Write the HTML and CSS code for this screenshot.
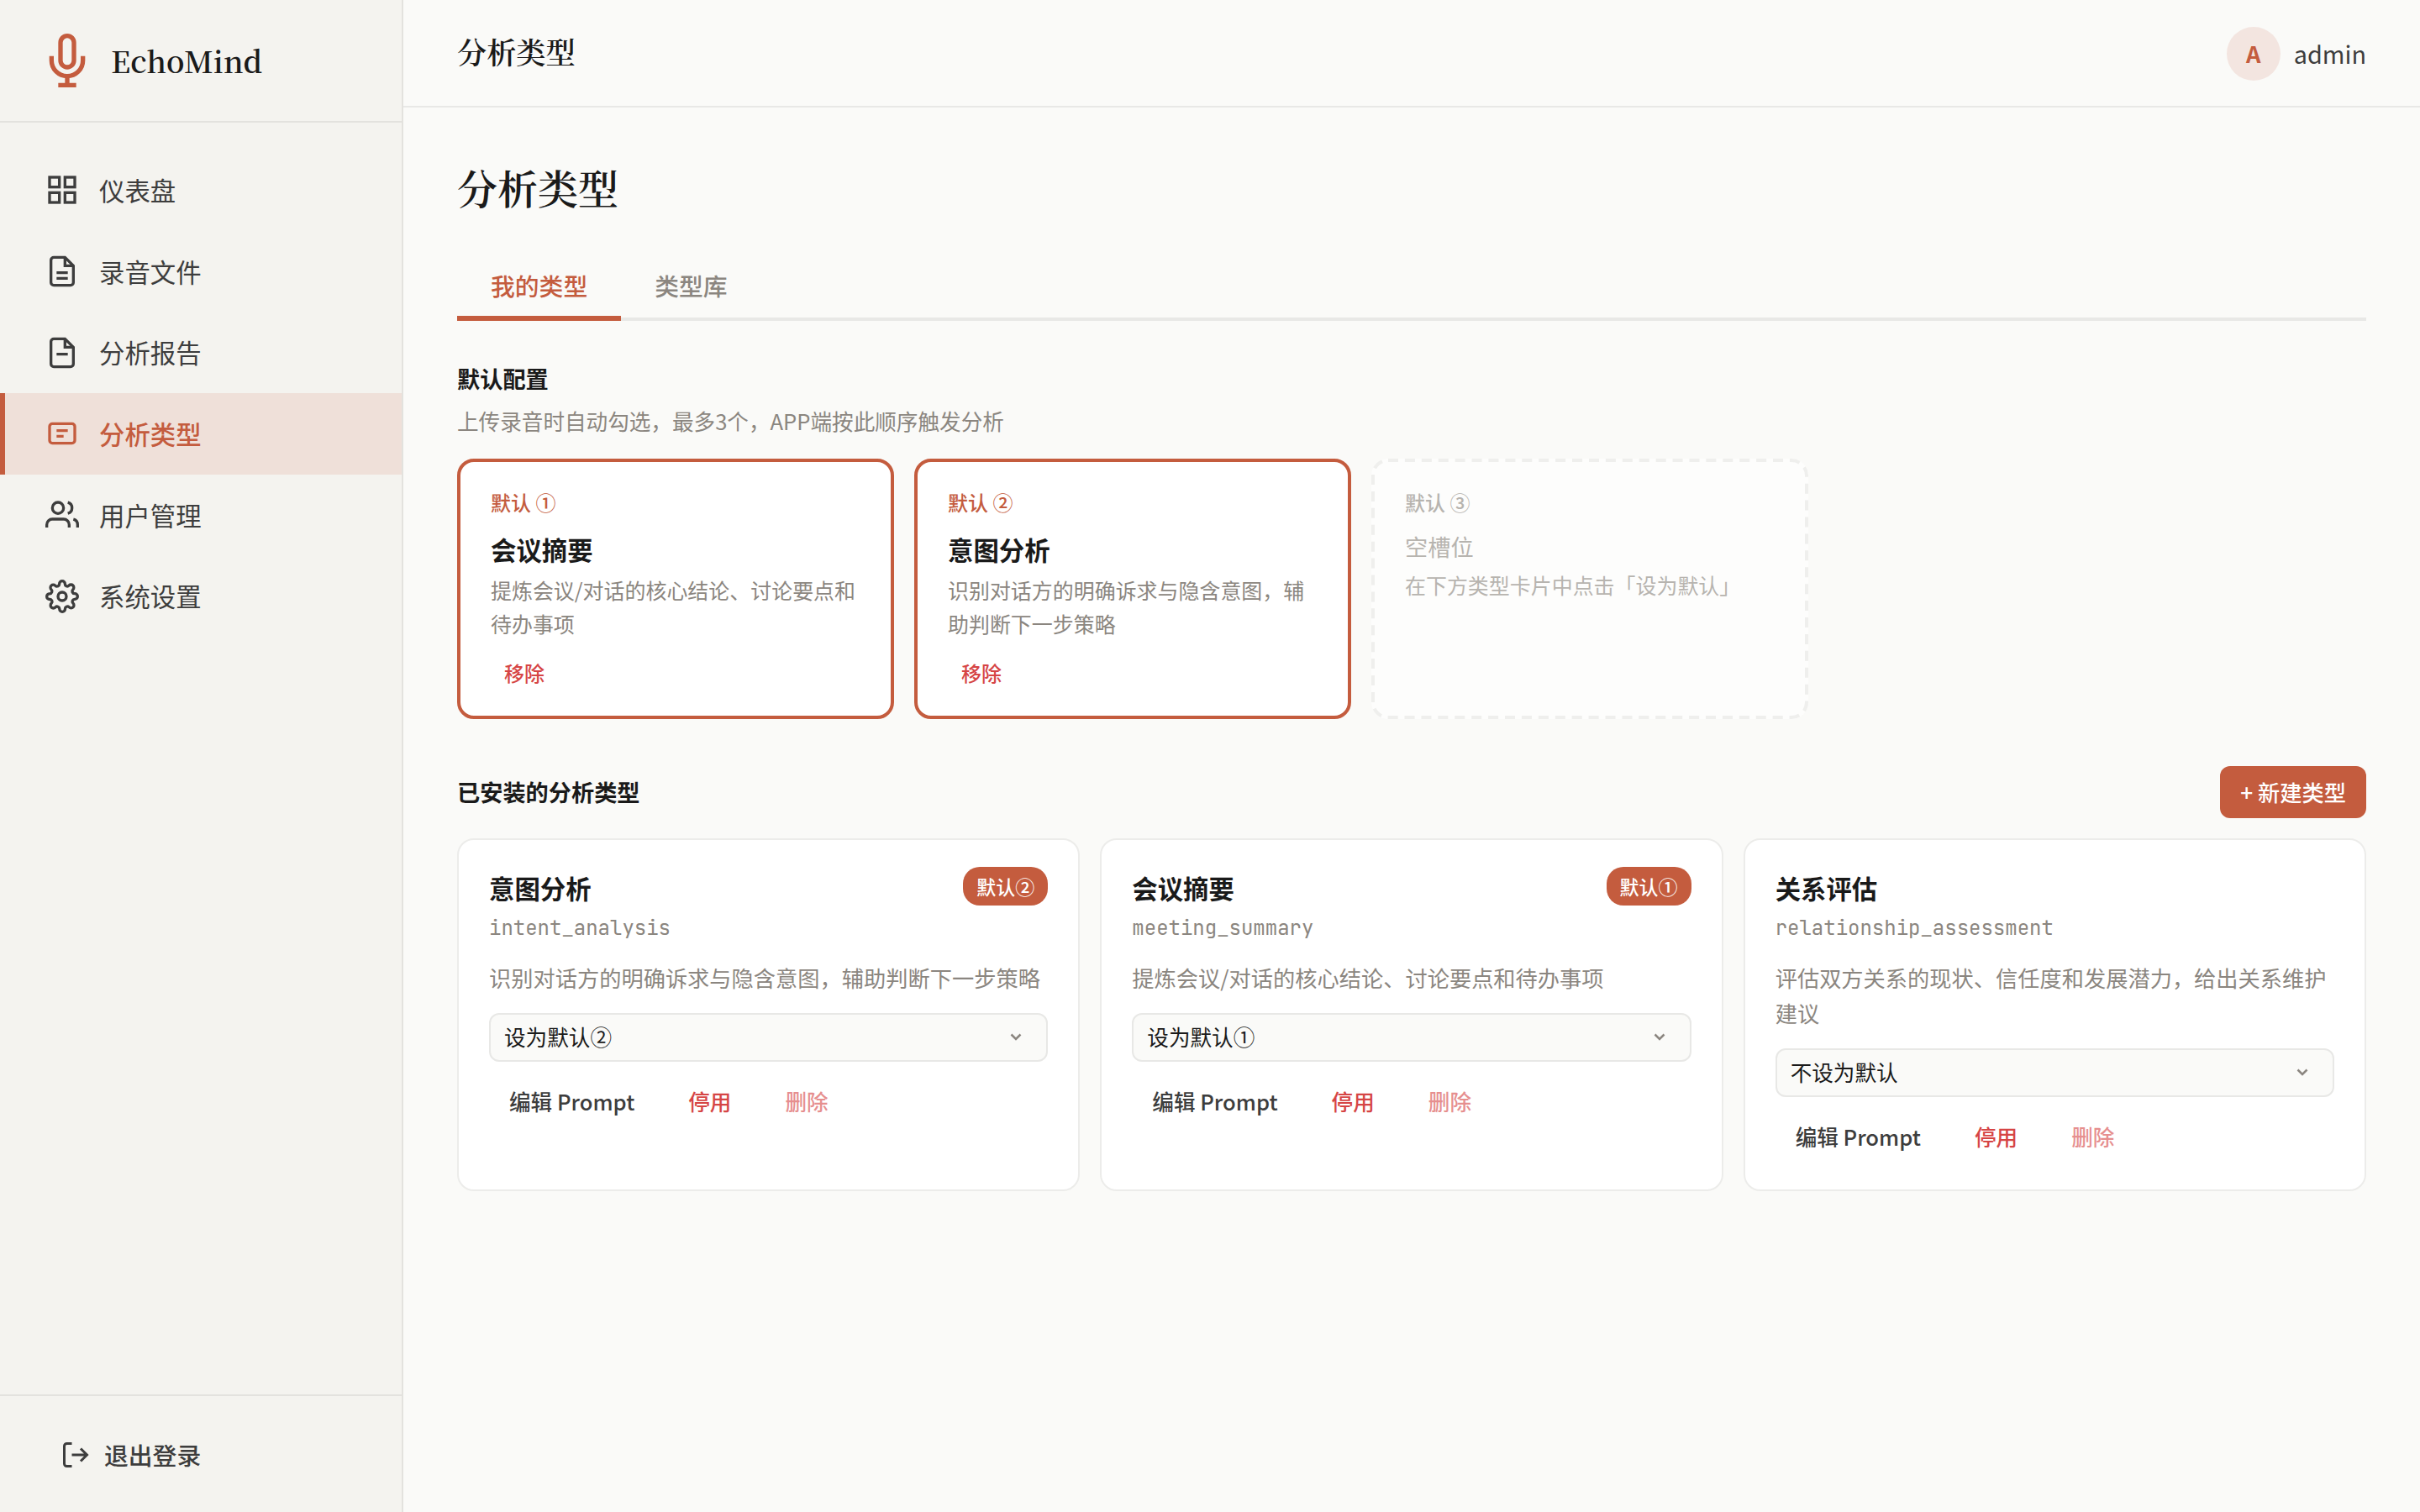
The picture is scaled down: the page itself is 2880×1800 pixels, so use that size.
FILE: index.html
```html
<!DOCTYPE html>
<html lang="zh-CN">
<head>
    <meta charset="UTF-8">
    <meta name="viewport" content="width=device-width, initial-scale=1.0">
    <title>EchoMind - 分析类型</title>
    <link rel="stylesheet" href="styles.css">
</head>
<body>
    <div class="layout">
        <aside class="sidebar">
            <div class="logo">
                <svg class="logo-icon" viewBox="0 0 24 24">
                    <path d="M12 1a3 3 0 0 0-3 3v8a3 3 0 0 0 6 0V4a3 3 0 0 0-3-3z"/>
                    <path d="M19 10v2a7 7 0 0 1-14 0v-2"/>
                    <path d="M12 19v4M8 23h8"/>
                </svg>
                <span class="logo-text">EchoMind</span>
            </div>
            <nav class="nav">
                <a class="nav-item">
                    <svg class="nav-icon" viewBox="0 0 24 24">
                        <rect x="3" y="3" width="7" height="7"/>
                        <rect x="14" y="3" width="7" height="7"/>
                        <rect x="14" y="14" width="7" height="7"/>
                        <rect x="3" y="14" width="7" height="7"/>
                    </svg>
                    <span>仪表盘</span>
                </a>
                <a class="nav-item">
                    <svg class="nav-icon" viewBox="0 0 24 24">
                        <path d="M14 2H6a2 2 0 0 0-2 2v16a2 2 0 0 0 2 2h12a2 2 0 0 0 2-2V8z"/>
                        <path d="M14 2v6h6M16 13H8M16 17H8"/>
                    </svg>
                    <span>录音文件</span>
                </a>
                <a class="nav-item">
                    <svg class="nav-icon" viewBox="0 0 24 24">
                        <path d="M14 2H6a2 2 0 0 0-2 2v16a2 2 0 0 0 2 2h12a2 2 0 0 0 2-2V8z"/>
                        <path d="M14 2v6h6M16 13H8"/>
                    </svg>
                    <span>分析报告</span>
                </a>
                <a class="nav-item active">
                    <svg class="nav-icon" viewBox="0 0 24 24">
                        <rect x="3" y="5" width="18" height="14" rx="2"/>
                        <path d="M8 10h8M8 14h5"/>
                    </svg>
                    <span>分析类型</span>
                </a>
                <a class="nav-item">
                    <svg class="nav-icon" viewBox="0 0 24 24">
                        <path d="M17 21v-2a4 4 0 0 0-4-4H5a4 4 0 0 0-4 4v2"/>
                        <circle cx="9" cy="7" r="4"/>
                        <path d="M23 21v-2a4 4 0 0 0-3-3.87"/>
                        <path d="M16 3.13a4 4 0 0 1 0 7.75"/>
                    </svg>
                    <span>用户管理</span>
                </a>
                <a class="nav-item">
                    <svg class="nav-icon" viewBox="0 0 24 24">
                        <circle cx="12" cy="12" r="3"/>
                        <path d="M19.4 15a1.65 1.65 0 0 0 .33 1.82l.06.06a2 2 0 0 1 0 2.83 2 2 0 0 1-2.83 0l-.06-.06a1.65 1.65 0 0 0-1.82-.33 1.65 1.65 0 0 0-1 1.51V21a2 2 0 0 1-2 2 2 2 0 0 1-2-2v-.09A1.65 1.65 0 0 0 9 19.4a1.65 1.65 0 0 0-1.82.33l-.06.06a2 2 0 0 1-2.83 0 2 2 0 0 1 0-2.83l.06-.06a1.65 1.65 0 0 0 .33-1.82 1.65 1.65 0 0 0-1.51-1H3a2 2 0 0 1-2-2 2 2 0 0 1 2-2h.09A1.65 1.65 0 0 0 4.6 9a1.65 1.65 0 0 0-.33-1.82l-.06-.06a2 2 0 0 1 0-2.83 2 2 0 0 1 2.83 0l.06.06a1.65 1.65 0 0 0 1.82.33H9a1.65 1.65 0 0 0 1-1.51V3a2 2 0 0 1 2-2 2 2 0 0 1 2 2v.09a1.65 1.65 0 0 0 1 1.51 1.65 1.65 0 0 0 1.82-.33l.06-.06a2 2 0 0 1 2.83 0 2 2 0 0 1 0 2.83l-.06.06a1.65 1.65 0 0 0-.33 1.82V9a1.65 1.65 0 0 0 1.51 1H21a2 2 0 0 1 2 2 2 2 0 0 1-2 2h-.09a1.65 1.65 0 0 0-1.51 1z"/>
                    </svg>
                    <span>系统设置</span>
                </a>
            </nav>
            <div class="sidebar-footer">
                <button class="logout">
                    <svg class="logout-icon" viewBox="0 0 24 24">
                        <path d="M9 21H5a2 2 0 0 1-2-2V5a2 2 0 0 1 2-2h4"/>
                        <path d="M16 17l5-5-5-5M21 12H9"/>
                    </svg>
                    <span>退出登录</span>
                </button>
            </div>
        </aside>

        <div class="main">
            <header class="topbar">
                <span class="topbar-title">分析类型</span>
                <div class="user">
                    <span class="avatar">A</span>
                    <span class="user-name">admin</span>
                </div>
            </header>

            <main class="content">
                <h1 class="page-title">分析类型</h1>

                <div class="tabs">
                    <button class="tab active">我的类型</button>
                    <button class="tab">类型库</button>
                </div>

                <section class="defaults">
                    <h2 class="section-title">默认配置</h2>
                    <p class="section-hint">上传录音时自动勾选，最多3个，APP端按此顺序触发分析</p>
                    <div class="slots">
                        <div class="slot">
                            <div class="slot-label">默认 ①</div>
                            <div class="slot-name">会议摘要</div>
                            <div class="slot-desc">提炼会议/对话的核心结论、讨论要点和待办事项</div>
                            <button class="slot-remove">移除</button>
                        </div>
                        <div class="slot">
                            <div class="slot-label">默认 ②</div>
                            <div class="slot-name">意图分析</div>
                            <div class="slot-desc">识别对话方的明确诉求与隐含意图，辅助判断下一步策略</div>
                            <button class="slot-remove">移除</button>
                        </div>
                        <div class="slot empty">
                            <svg class="slot-outline" viewBox="0 0 520 310">
                                <rect x="2" y="2" width="516" height="306" rx="18"/>
                            </svg>
                            <div class="slot-label">默认 ③</div>
                            <div class="slot-name">空槽位</div>
                            <div class="slot-desc">在下方类型卡片中点击「设为默认」</div>
                        </div>
                    </div>
                </section>

                <section class="installed">
                    <div class="section-head">
                        <h2 class="section-title">已安装的分析类型</h2>
                        <button class="btn btn-primary">+ 新建类型</button>
                    </div>
                    <div class="cards">
                        <article class="card">
                            <div class="card-head">
                                <h3 class="card-title">意图分析</h3>
                                <span class="badge">默认②</span>
                            </div>
                            <div class="card-slug">intent_analysis</div>
                            <p class="card-desc">识别对话方的明确诉求与隐含意图，辅助判断下一步策略</p>
                            <div class="select">
                                <span>设为默认②</span>
                                <svg class="select-arrow" viewBox="0 0 24 24"><path d="M6.5 8.5l5.5 5.5 5.5-5.5"/></svg>
                            </div>
                            <div class="card-actions">
                                <button class="btn">编辑 Prompt</button>
                                <button class="btn btn-danger">停用</button>
                                <button class="btn btn-danger faded">删除</button>
                            </div>
                        </article>
                        <article class="card">
                            <div class="card-head">
                                <h3 class="card-title">会议摘要</h3>
                                <span class="badge">默认①</span>
                            </div>
                            <div class="card-slug">meeting_summary</div>
                            <p class="card-desc">提炼会议/对话的核心结论、讨论要点和待办事项</p>
                            <div class="select">
                                <span>设为默认①</span>
                                <svg class="select-arrow" viewBox="0 0 24 24"><path d="M6.5 8.5l5.5 5.5 5.5-5.5"/></svg>
                            </div>
                            <div class="card-actions">
                                <button class="btn">编辑 Prompt</button>
                                <button class="btn btn-danger">停用</button>
                                <button class="btn btn-danger faded">删除</button>
                            </div>
                        </article>
                        <article class="card">
                            <div class="card-head">
                                <h3 class="card-title">关系评估</h3>
                            </div>
                            <div class="card-slug">relationship_assessment</div>
                            <p class="card-desc">评估双方关系的现状、信任度和发展潜力，给出关系维护建议</p>
                            <div class="select">
                                <span>不设为默认</span>
                                <svg class="select-arrow" viewBox="0 0 24 24"><path d="M6.5 8.5l5.5 5.5 5.5-5.5"/></svg>
                            </div>
                            <div class="card-actions">
                                <button class="btn">编辑 Prompt</button>
                                <button class="btn btn-danger">停用</button>
                                <button class="btn btn-danger faded">删除</button>
                            </div>
                        </article>
                    </div>
                </section>
            </main>
        </div>
    </div>
</body>
</html>
```
FILE: styles.css
```css
:root{
    --accent: #c45c3e;
    --bg: #fafaf8;
    --bg-side: #f4f3ef;
    --border: #e8e8e6;
    --border-side: #e3e2de;
    --text: #1a1a1a;
    --text-2: #3d3d3d;
    --muted: #8b8680;
    --danger: #d64545;
    --serif: "Noto Serif CJK SC", "Noto Serif SC", "Source Serif 4", "Liberation Serif", "Noto Sans CJK SC", serif;
    --mono: "JetBrains Mono", "Liberation Mono", monospace;
}

*,
*:after,
*:before{
    box-sizing: border-box;
}

body{
    margin: 0;
    background-color: var(--bg);
    color: var(--text);
    font-family: "Noto Sans CJK SC", sans-serif;
    font-size: 32px;
    line-height: 1.6;
}

h1, h2, h3, p{
    margin: 0;
}

button{
    border: none;
    background: none;
    padding: 0;
    font-family: inherit;
    line-height: 1.6;
}

svg{
    fill: none;
    stroke: currentColor;
    stroke-width: 2;
    flex-shrink: 0;
}

.layout{
    display: flex;
    height: 100vh;
}

/* sidebar */
.sidebar{
    display: flex;
    flex-direction: column;
    width: 480px;
    flex-shrink: 0;
    background-color: var(--bg-side);
    border-right: 2px solid var(--border-side);
    color: var(--text-2);
}

.logo{
    display: flex;
    align-items: center;
    gap: 20px;
    height: 146px;
    padding: 0 48px;
    border-bottom: 2px solid var(--border-side);
}

.logo-icon{
    width: 64px;
    height: 64px;
    color: var(--accent);
}

.logo-text{
    font-family: var(--serif);
    font-size: 35.2px;
    font-weight: 600;
    color: var(--text);
}

.nav{
    flex: 1;
    padding: 32px 0;
}

.nav-item{
    display: flex;
    align-items: center;
    gap: 24px;
    padding: 24px 48px;
    border-left: 6px solid transparent;
    font-size: 30.4px;
}

.nav-item.active{
    background-color: #efe0d9;
    border-left-color: var(--accent);
    color: var(--accent);
    font-weight: 500;
}

.nav-icon{
    width: 40px;
    height: 40px;
}

.sidebar-footer{
    padding: 47px 48px 45px;
    border-top: 2px solid var(--border-side);
}

.logout{
    display: flex;
    align-items: center;
    gap: 16px;
    padding: 0 24px;
    color: var(--text-2);
    font-size: 28.8px;
    font-weight: 500;
}

.logout-icon{
    width: 36px;
    height: 36px;
}

/* topbar */
.main{
    flex: 1;
    min-width: 0;
}

.topbar{
    display: flex;
    align-items: center;
    justify-content: space-between;
    height: 128px;
    padding: 2px 64px 0;
    border-bottom: 2px solid var(--border);
}

.topbar-title{
    margin-bottom: 5px;
    font-family: var(--serif);
    font-size: 35.2px;
    font-weight: 600;
}

.user{
    display: flex;
    align-items: center;
    gap: 16px;
}

.avatar{
    display: flex;
    align-items: center;
    justify-content: center;
    width: 64px;
    height: 64px;
    border-radius: 50%;
    background-color: #f3e5e0;
    color: var(--accent);
    font-size: 27.2px;
    font-weight: 600;
}

.user-name{
    color: var(--text-2);
    font-size: 28.8px;
}

/* content */
.content{
    padding: 64px;
}

.page-title{
    margin-bottom: 48px;
    font-family: var(--serif);
    font-size: 48px;
    font-weight: 600;
    line-height: 62px;
}

.tabs{
    display: flex;
    height: 80px;
    margin-bottom: 47px;
    border-bottom: 4px solid var(--border);
}

.tab{
    height: 80px;
    padding: 3px 40px 0;
    border-bottom: 6px solid transparent;
    color: var(--muted);
    font-size: 28.8px;
    font-weight: 500;
}

.tab.active{
    border-bottom-color: var(--accent);
    color: var(--accent);
}

.section-title{
    font-size: 27.2px;
    font-weight: 600;
}

.section-hint{
    margin: 8px 0 24.5px;
    color: var(--muted);
    font-size: 25.6px;
}

.slots{
    display: flex;
    gap: 24px;
    margin-bottom: 56px;
}

.slot{
    position: relative;
    width: 520px;
    height: 310px;
    padding: 29px 36px;
    border: 4px solid var(--accent);
    border-radius: 20px;
    background-color: #fff;
}

.slot-label{
    margin-bottom: 13px;
    color: var(--accent);
    font-size: 24px;
    font-weight: 500;
}

.slot-name{
    margin-bottom: 4px;
    font-size: 30.4px;
    font-weight: 600;
}

.slot-desc{
    color: var(--muted);
    font-size: 24.96px;
}

.slot-remove{
    display: block;
    height: 43px;
    margin-top: 17px;
    padding: 0 16px;
    color: var(--danger);
    font-size: 24px;
    font-weight: 500;
}

.slot.empty{
    border-color: transparent;
    opacity: .6;
}

/* dashed frame, drawn over the transparent border */
.slot-outline{
    position: absolute;
    inset: -4px;
    width: 520px;
    height: 310px;
    color: var(--border);
    stroke-width: 4;
    stroke-dasharray: 12 7.915;
}

.slot.empty .slot-label,
.slot.empty .slot-name{
    color: var(--muted);
}

.slot.empty .slot-label{
    margin-bottom: 12px;
}

.slot.empty .slot-name{
    font-size: 27.2px;
    font-weight: 400;
}

.section-head{
    display: flex;
    align-items: center;
    justify-content: space-between;
    margin-bottom: 24px;
}

.btn{
    height: 62px;
    padding: 2px 24px 0;
    border-radius: 12px;
    color: var(--text-2);
    font-size: 25.6px;
    font-weight: 500;
}

.btn-primary{
    background-color: var(--accent);
    color: #fff;
    font-size: 26.24px;
}

.btn-danger{
    color: var(--danger);
}

.faded{
    opacity: .6;
}

/* type cards */
.cards{
    display: grid;
    grid-template-columns: repeat(3, 1fr);
    gap: 24px;
}

.card{
    padding: 32px 36px;
    border: 2px solid #ececea;
    border-radius: 20px;
    background-color: #fff;
}

.card-head{
    display: flex;
    align-items: flex-start;
    justify-content: space-between;
}

.card-title{
    padding-top: 1px;
    font-size: 30.4px;
    font-weight: 600;
}

.badge{
    height: 46px;
    padding: 0 16px;
    border-radius: 20px;
    background-color: var(--accent);
    color: #fff;
    font-size: 23.04px;
    font-weight: 500;
    line-height: 46px;
}

.card-slug{
    margin: 4px 0 20px;
    color: var(--muted);
    font-family: var(--mono);
    font-size: 24px;
}

.card-desc{
    margin-bottom: 20px;
    color: var(--muted);
    font-size: 26.24px;
}

.select{
    display: flex;
    align-items: center;
    justify-content: space-between;
    height: 58px;
    padding: 0 24px 0 16px;
    border: 2px solid var(--border);
    border-radius: 12px;
    background-color: var(--bg);
    font-size: 25.6px;
}

.select-arrow{
    width: 24px;
    height: 24px;
    color: var(--muted);
    stroke-width: 2.5;
}

.card-actions{
    display: flex;
    gap: 16px;
    margin-top: 16px;
}
```
